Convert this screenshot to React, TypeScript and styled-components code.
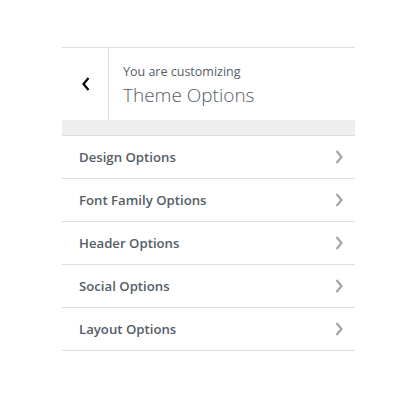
import { FC } from 'react';
import styled, { createGlobalStyle } from 'styled-components';

const GlobalStyle = createGlobalStyle`
  body {
    margin: 0;
    background: #fff;
    font-family: 'Open Sans', 'Noto Sans', sans-serif;
  }
`;

const Panel = styled.div`
  width: 293px;
  margin: 47px 0 0 62px;
`;

const Header = styled.div`
  display: flex;
  height: 72px;
  border-top: 1px solid #ddd;
`;

const BackButton = styled.button`
  width: 47px;
  flex: none;
  display: flex;
  align-items: center;
  justify-content: center;
  padding: 0 0 0 2px;
  background: #fff;
  border: 0;
  border-right: 1px solid #ddd;
  color: #000;
  cursor: pointer;
`;

const TitleBlock = styled.div`
  padding: 15px 0 0 14px;
  color: #555d66;
`;

const Small = styled.div`
  font-size: 12.5px;
  line-height: 18px;
`;

const Big = styled.div`
  font-size: 19px;
  font-weight: 300;
  line-height: 28px;
`;

const Strip = styled.div`
  height: 15px;
  background: #eee;
  border-bottom: 1px solid #ddd;
`;

const Row = styled.div`
  display: flex;
  align-items: center;
  justify-content: space-between;
  height: 42px;
  padding: 0 11px 0 17px;
  border-bottom: 1px solid #ddd;
  color: #555d66;
  font-size: 13.2px;
  font-weight: 600;
  cursor: pointer;
`;

const Chevron: FC<{ dir: 'left' | 'right'; color: string }> = ({ dir, color }) => (
  <svg width="10" height="16" viewBox="0 0 10 16">
    <path
      d={dir === 'left' ? 'M7.5 2 2.5 8l5 6' : 'M2.5 2 7.5 8l-5 6'}
      fill="none"
      stroke={color}
      strokeWidth={dir === 'left' ? 2.2 : 2.2}
    />
  </svg>
);

const sections = [
  'Design Options',
  'Font Family Options',
  'Header Options',
  'Social Options',
  'Layout Options',
];

const App: FC = () => (
  <>
    <GlobalStyle />
    <Panel>
      <Header>
        <BackButton>
          <Chevron dir="left" color="#000" />
        </BackButton>
        <TitleBlock>
          <Small>You are customizing</Small>
          <Big>Theme Options</Big>
        </TitleBlock>
      </Header>
      <Strip />
      {sections.map(s => (
        <Row key={s}>
          {s}
          <Chevron dir="right" color="#a0a5aa" />
        </Row>
      ))}
    </Panel>
  </>
);

export default App;
